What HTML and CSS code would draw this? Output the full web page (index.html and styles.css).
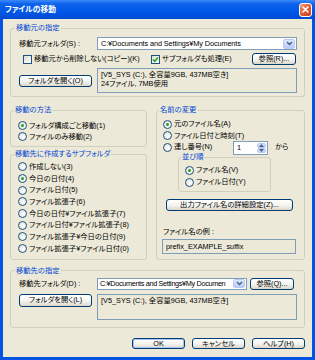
FILE: index.html
```html
<!DOCTYPE html>
<html lang="ja">
<head>
  <meta charset="UTF-8">
  <title>ファイルの移動</title>
  <link rel="stylesheet" href="styles.css">
</head>
<body>
  <div class="window">
    <div class="titlebar">
      <span class="title">ファイルの移動</span>
      <span class="close">
        <svg width="7" height="7" viewBox="0 0 7 7"><path d="M1 1L6 6M6 1L1 6" stroke="#fff" stroke-width="1.6" stroke-linecap="round"/></svg>
      </span>
    </div>

    <div class="client">
      <!-- 移動元 -->
      <fieldset class="group src">
        <legend>移動元の指定</legend>
        <div class="row">
          <span class="field-label">移動元フォルダ(S) :</span>
          <div class="combo">
            <span class="combo-text">C:¥Documents and Settings¥My Documents</span>
            <span class="combo-btn"><svg width="7" height="5" viewBox="0 0 7 5"><path d="M1 1L3.5 3.5L6 1" fill="none" stroke="#4D6185" stroke-width="1.5"/></svg></span>
          </div>
        </div>
        <div class="row checks">
          <span class="check first"><span class="box"></span>移動元から削除しない(コピー)(K)</span>
          <span class="check"><span class="box on"><svg width="7" height="7" viewBox="0 0 7 7"><path d="M1 3.5L2.8 5.3L6 1.5" fill="none" stroke="#21A121" stroke-width="1.6"/></svg></span>サブフォルダも処理(E)</span>
          <button class="btn browse">参照(R)...</button>
        </div>
        <div class="row">
          <button class="btn open">フォルダを開く(O)</button>
          <div class="info">[V5_SYS (C:), 全容量9GB, 437MB空き]<br>24ファイル, 7MB使用</div>
        </div>
      </fieldset>

      <div class="middle">
        <div class="left-col">
          <fieldset class="group method">
            <legend>移動の方法</legend>
            <span class="opt"><span class="radio on"></span>フォルダ構成ごと移動(1)</span>
            <span class="opt"><span class="radio"></span>ファイルのみ移動(2)</span>
          </fieldset>
          <fieldset class="group subfolder">
            <legend>移動先に作成するサブフォルダ</legend>
            <span class="opt"><span class="radio"></span>作成しない(3)</span>
            <span class="opt"><span class="radio on"></span>今日の日付(4)</span>
            <span class="opt"><span class="radio"></span>ファイル日付(5)</span>
            <span class="opt"><span class="radio"></span>ファイル拡張子(6)</span>
            <span class="opt"><span class="radio"></span>今日の日付¥ファイル拡張子(7)</span>
            <span class="opt"><span class="radio"></span>ファイル日付¥ファイル拡張子(8)</span>
            <span class="opt"><span class="radio"></span>ファイル拡張子¥今日の日付(9)</span>
            <span class="opt"><span class="radio"></span>ファイル拡張子¥ファイル日付(0)</span>
          </fieldset>
        </div>

        <fieldset class="group rename">
          <legend>名前の変更</legend>
          <span class="opt first"><span class="radio on"></span>元のファイル名(A)</span>
          <span class="opt"><span class="radio"></span>ファイル日付と時刻(T)</span>
          <div class="serial">
            <span class="opt serial-opt"><span class="radio"></span>連し番号(N)</span>
            <div class="spin">
              <span class="spin-val">1</span>
              <span class="spin-btns">
                <span class="spin-btn"><svg width="5" height="3" viewBox="0 0 5 3"><path d="M0 3L2.5 0L5 3Z" fill="#4D6185"/></svg></span>
                <span class="spin-btn"><svg width="5" height="3" viewBox="0 0 5 3"><path d="M0 0L2.5 3L5 0Z" fill="#4D6185"/></svg></span>
              </span>
            </div>
            <span class="from">から</span>
          </div>
          <fieldset class="group order">
            <legend>並び順</legend>
            <span class="opt"><span class="radio on"></span>ファイル名(V)</span>
            <span class="opt"><span class="radio"></span>ファイル日付(Y)</span>
          </fieldset>
          <button class="btn detail">出力ファイル名の詳細設定(Z)...</button>
          <div class="example-label">ファイル名の例 :</div>
          <div class="example">prefix_EXAMPLE_suffix</div>
        </fieldset>
      </div>

      <!-- 移動先 -->
      <fieldset class="group dest">
        <legend>移動先の指定</legend>
        <div class="row">
          <span class="field-label">移動先フォルダ(D) :</span>
          <div class="combo short">
            <span class="combo-text">C:¥Documents and Settings¥My Documen</span>
            <span class="combo-btn"><svg width="7" height="5" viewBox="0 0 7 5"><path d="M1 1L3.5 3.5L6 1" fill="none" stroke="#4D6185" stroke-width="1.5"/></svg></span>
          </div>
          <button class="btn browse">参照(Q)...</button>
        </div>
        <div class="row second">
          <button class="btn open">フォルダを開く(L)</button>
          <div class="info tall">[V5_SYS (C:), 全容量9GB, 437MB空き]</div>
        </div>
      </fieldset>

      <div class="actions">
        <button class="btn action default">OK</button>
        <button class="btn action">キャンセル</button>
        <button class="btn action">ヘルプ(H)</button>
      </div>
    </div>
  </div>
</body>
</html>
```

FILE: styles.css
```css
* { box-sizing: border-box; }
body { margin: 0; font-family: "Liberation Sans", "Noto Sans CJK JP", sans-serif; font-size: 7.3px; line-height: 10px; font-feature-settings: "palt"; color: #000; }

.window { width: 315px; height: 360px; display: flex; flex-direction: column; background: #0553E4; }
.titlebar { height: 19px; flex: none; display: flex; align-items: center; justify-content: space-between; padding: 0 3px 0 5px; background: linear-gradient(#3A8CF8, #0C62EC 4px, #0058E6 12px, #0049D2); }
.title { color: #fff; font-weight: bold; font-size: 7.8px; }
.close { width: 13px; height: 14px; border: 1px solid #fff; border-radius: 3px; background: linear-gradient(135deg, #F39878, #E15A34 55%, #C8401E); display: flex; align-items: center; justify-content: center; }

.client { flex: 1; margin: 0 3px 3px; background: #ECE9D8; padding: 0 7px; display: flex; flex-direction: column; }

.group { margin: 0; min-width: 0; border: 1px solid #D0D0BF; border-radius: 3px; padding: 0 7px 0 8px; }
.group legend { color: #0046D5; padding: 0 1px; margin-left: -4px; line-height: 10px; }

.row { display: flex; align-items: center; }
.field-label { width: 78px; flex: none; white-space: nowrap; }

.combo { flex: 1; height: 13px; border: 1px solid #7F9DB9; background: #fff; display: flex; align-items: center; padding: 0 1px 0 0; }
.combo-text { flex: 1; padding-left: 3px; white-space: nowrap; overflow: hidden; letter-spacing: -0.1px; }
.combo-btn { width: 12px; height: 10px; flex: none; border: 1px solid #BAC9F0; border-radius: 2px; background: linear-gradient(#DCE7FD, #B6CCF8); display: flex; align-items: center; justify-content: center; }
.combo.short { flex: none; width: 150px; height: 12px; }
.combo.short .combo-text { padding-left: 2px; letter-spacing: -0.35px; }
.combo.short .combo-btn { height: 9px; }

.btn { font: inherit; line-height: 10px; color: #000; padding: 0; height: 12px; border: 1px solid #003C74; border-radius: 3px; background: linear-gradient(#FFFFFF, #F4F3EE 55%, #DCD7CB); white-space: nowrap; }
.browse { width: 44px; }
.open { width: 73px; }

/* 移動元 */
.src { margin-top: 4px; padding: 4px 7px 3px 8px; }
.src .row + .row { margin-top: 3px; }
.checks { height: 12px; }
.check { display: flex; align-items: center; gap: 2px; white-space: nowrap; }
.check.first { margin-left: 4px; width: 128px; }
.checks .browse { margin-left: auto; margin-right: 1px; }
.box { width: 9px; height: 9px; flex: none; border: 1px solid #1C5180; background: linear-gradient(135deg, #DCDCD7, #FFFFFF); display: flex; align-items: center; justify-content: center; }
.info { flex: 1; height: 25px; margin-left: 5px; border: 1px solid #7F9DB9; padding: 1px 3px; line-height: 9px; white-space: nowrap; overflow: hidden; }

/* ラジオ */
.opt { display: flex; align-items: center; gap: 2px; height: 11px; white-space: nowrap; }
.radio { width: 9px; height: 9px; flex: none; border-radius: 50%; border: 1px solid #1C5180; background: radial-gradient(circle at 65% 65%, #FFFFFF, #DCDCD7); display: flex; align-items: center; justify-content: center; }
.radio.on::after { content: ""; width: 3px; height: 3px; border-radius: 50%; background: #21A121; }

.middle { display: flex; gap: 9px; margin-top: 8px; }
.left-col { width: 137px; flex: none; display: flex; flex-direction: column; }
.method { padding: 5px 7px 4px; }
.subfolder { margin-top: 2px; padding: 2px 7px 4px; }
.subfolder .opt { height: 11.7px; }

.rename { flex: 1; padding: 3px 6px 0; }
.rename .opt.first { height: 12px; }
.serial { display: flex; height: 12px; }
.serial-opt { width: 70px; height: 12px; }
.spin { width: 35px; height: 14px; flex: none; border: 1px solid #7F9DB9; background: #fff; display: flex; }
.spin-val { flex: 1; padding-left: 3px; line-height: 12px; }
.spin-btns { width: 10px; display: flex; flex-direction: column; padding: 1px 1px 1px 0; }
.spin-btn { flex: 1; border: 1px solid #BAC9F0; border-radius: 2px; background: linear-gradient(#DCE7FD, #B6CCF8); display: flex; align-items: center; justify-content: center; }
.from { margin-left: 7px; line-height: 12px; }

.order { margin: 0 0 0 15px; width: 93px; padding: 3px 6px 3px; }
.order legend { line-height: 8px; }
.order .opt { height: 12px; }
.detail { display: block; width: 127px; margin: 7px 0 0 3px; }
.example-label { margin-top: 16px; }
.example { width: 134px; height: 15px; margin: 2px 0 0 -1px; border: 1px solid #7F9DB9; padding: 0 3px; line-height: 13px; }

/* 移動先 */
.dest { margin-top: 6px; padding: 2px 7px 7px 8px; }
.dest .row { height: 12px; }
.dest .browse { margin-left: 3px; }
.dest .row.second { height: 26px; margin-top: 4px; align-items: flex-start; }
.dest .open { height: 13px; }
.info.tall { height: 26px; }

.actions { display: flex; justify-content: flex-end; gap: 7px; margin-top: 10px; }
.action { width: 53px; height: 11px; }
.default { box-shadow: inset 0 0 0 1px #A9C4F5; }
```
